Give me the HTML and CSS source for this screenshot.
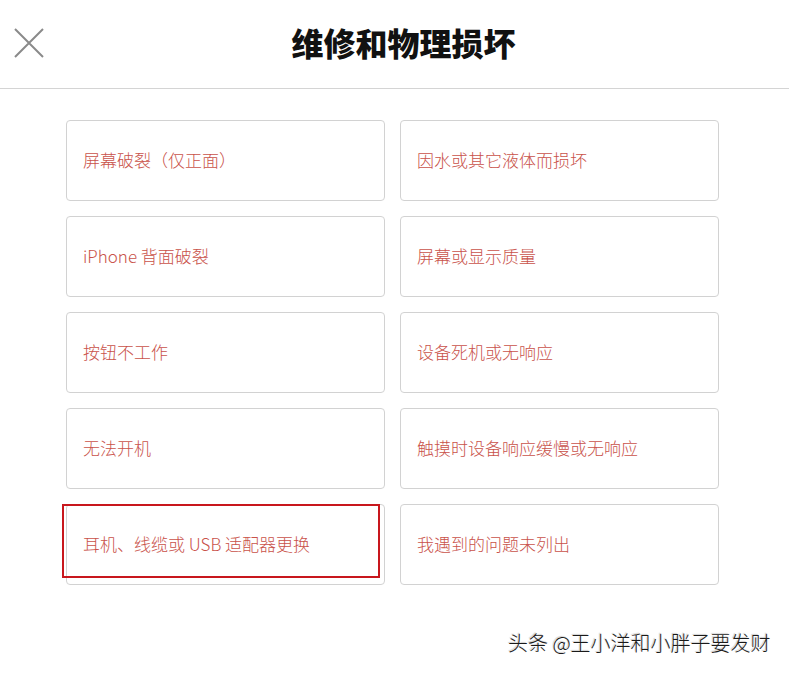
FILE: index.html
```html
<!DOCTYPE html>
<html lang="zh-CN">

<head>
    <meta charset="UTF-8">
    <meta name="viewport" content="width=device-width, initial-scale=1.0">
    <title>维修和物理损坏</title>
    <link rel="stylesheet" href="styles.css">
</head>

<body>
    <!-- 顶部标题栏 -->
    <header class="top-bar">
        <button class="close-btn" aria-label="关闭">
            <svg width="30" height="30" viewBox="0 0 30 30">
                <path d="M1 1 L29 29 M29 1 L1 29" stroke="#8a8a8a" stroke-width="2" fill="none" />
            </svg>
        </button>
        <h1 class="title">维修和物理损坏</h1>
    </header>

    <!-- 问题选项 -->
    <div class="options">
        <a class="option">屏幕破裂（仅正面）</a>
        <a class="option">因水或其它液体而损坏</a>
        <a class="option">iPhone 背面破裂</a>
        <a class="option">屏幕或显示质量</a>
        <a class="option">按钮不工作</a>
        <a class="option">设备死机或无响应</a>
        <a class="option">无法开机</a>
        <a class="option">触摸时设备响应缓慢或无响应</a>
        <a class="option">耳机、线缆或 USB 适配器更换</a>
        <a class="option">我遇到的问题未列出</a>
        <div class="mark"></div>
    </div>

    <div class="watermark">头条 @王小洋和小胖子要发财</div>
</body>

</html>
```

FILE: styles.css
```css
body {
    margin: 0;
    padding: 0;
    background: #fff;
    font-family: "Noto Sans CJK SC", "Liberation Sans", sans-serif;
    height: 673px;
    position: relative;
}

/* 标题栏 */
.top-bar {
    height: 88px;
    border-bottom: 1px solid #d4d4d4;
    display: flex;
    align-items: center;
    justify-content: center;
    position: relative;
}

.close-btn {
    position: absolute;
    left: 14px;
    top: 28px;
    padding: 0;
    border: none;
    background: none;
    cursor: pointer;
}

.close-btn svg {
    display: block;
}

.title {
    margin: 0 0 4px 18px;
    font-size: 32px;
    line-height: 1;
    font-weight: 900;
    color: #111;
}

/* 两列选项 */
.options {
    position: relative;
    display: grid;
    grid-template-columns: 319px 319px;
    grid-auto-rows: 81px;
    gap: 15px;
    margin: 31px 0 0 66px;
    width: 653px;
}

.option {
    display: flex;
    align-items: center;
    padding: 0 16px 2px;
    border: 1px solid #d2d2d2;
    border-radius: 4px;
    color: #c9524a;
    font-size: 17px;
    font-weight: 300;
    line-height: 1;
    cursor: pointer;
}

/* 红框标注 */
.mark {
    position: absolute;
    left: -4px;
    top: 384px;
    width: 314px;
    height: 70px;
    border: 2px solid #c8171d;
    pointer-events: none;
}

.watermark {
    position: absolute;
    left: 508px;
    top: 633px;
    font-size: 20px;
    line-height: 1;
    font-weight: 300;
    color: #1a1a1a;
    text-shadow: 1px 1px 1px #fff, -1px -1px 1px rgba(0, 0, 0, 0.2);
    white-space: nowrap;
}
```
